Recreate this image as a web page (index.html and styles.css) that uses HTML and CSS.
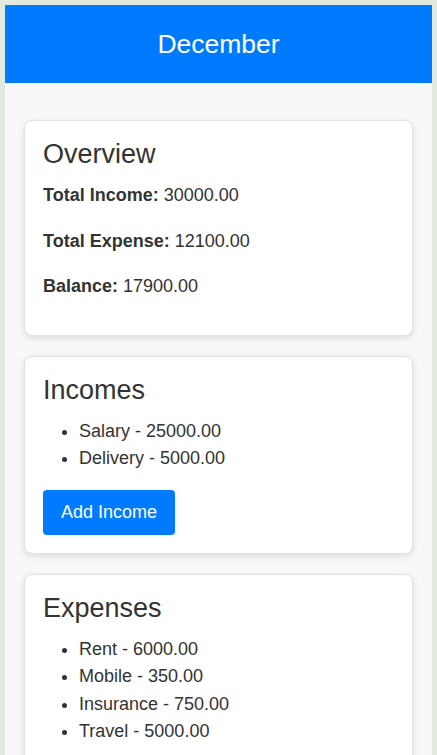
FILE: index.html
```html
<!DOCTYPE html>
<html lang="en">
<head>
<meta charset="utf-8">
<title>December</title>
<link rel="stylesheet" href="styles.css">
</head>
<body>
<div class="app">
  <header class="header"><h1 class="month">December</h1></header>
  <main class="main">
    <section class="card">
      <h2 class="card-title">Overview</h2>
      <p class="stat"><strong>Total Income:</strong> 30000.00</p>
      <p class="stat"><strong>Total Expense:</strong> 12100.00</p>
      <p class="stat"><strong>Balance:</strong> 17900.00</p>
    </section>
    <section class="card">
      <h2 class="card-title">Incomes</h2>
      <ul class="items">
        <li>Salary - 25000.00</li>
        <li>Delivery - 5000.00</li>
      </ul>
      <button class="btn">Add Income</button>
    </section>
    <section class="card">
      <h2 class="card-title">Expenses</h2>
      <ul class="items">
        <li>Rent - 6000.00</li>
        <li>Mobile - 350.00</li>
        <li>Insurance - 750.00</li>
        <li>Travel - 5000.00</li>
      </ul>
      <button class="btn">Add Expense</button>
    </section>
  </main>
</div>
</body>
</html>
```
FILE: styles.css
```css
html, body {
  margin: 0;
  height: 100%;
}
body {
  background: #e2e9df;
  padding: 5px 5px 0;
  box-sizing: border-box;
  font-family: "Liberation Sans", Arial, sans-serif;
  font-size: 18px;
  color: #333;
}
.app {
  background: #f8f8f8;
  min-height: 100%;
}
.header {
  background: #007bff;
  height: 78px;
  display: flex;
  align-items: center;
  justify-content: center;
}
.month {
  margin: 0;
  color: #fff;
  font-size: 26.5px;
  font-weight: normal;
}
.main {
  padding: 37px 19px 20px;
  display: flex;
  flex-direction: column;
  gap: 20px;
}
.card {
  background: #fff;
  border: 1px solid #e2e2e2;
  border-radius: 8px;
  box-shadow: 0 2px 6px rgba(0, 0, 0, 0.12);
  padding: 18px;
}
.card-title {
  margin: 0 0 12px;
  font-size: 27px;
  font-weight: normal;
  line-height: normal;
}
.stat {
  margin: 0 0 18px;
  line-height: 27.5px;
}
.stat:last-child {
  margin-bottom: 16px;
}
.items {
  margin: 0 0 17px;
  padding-left: 36px;
  line-height: 27.5px;
}
.btn {
  background: #007bff;
  color: #fff;
  border: none;
  border-radius: 4px;
  font-family: inherit;
  font-size: 18px;
  line-height: 25px;
  padding: 10px 18px;
  cursor: pointer;
}
```
